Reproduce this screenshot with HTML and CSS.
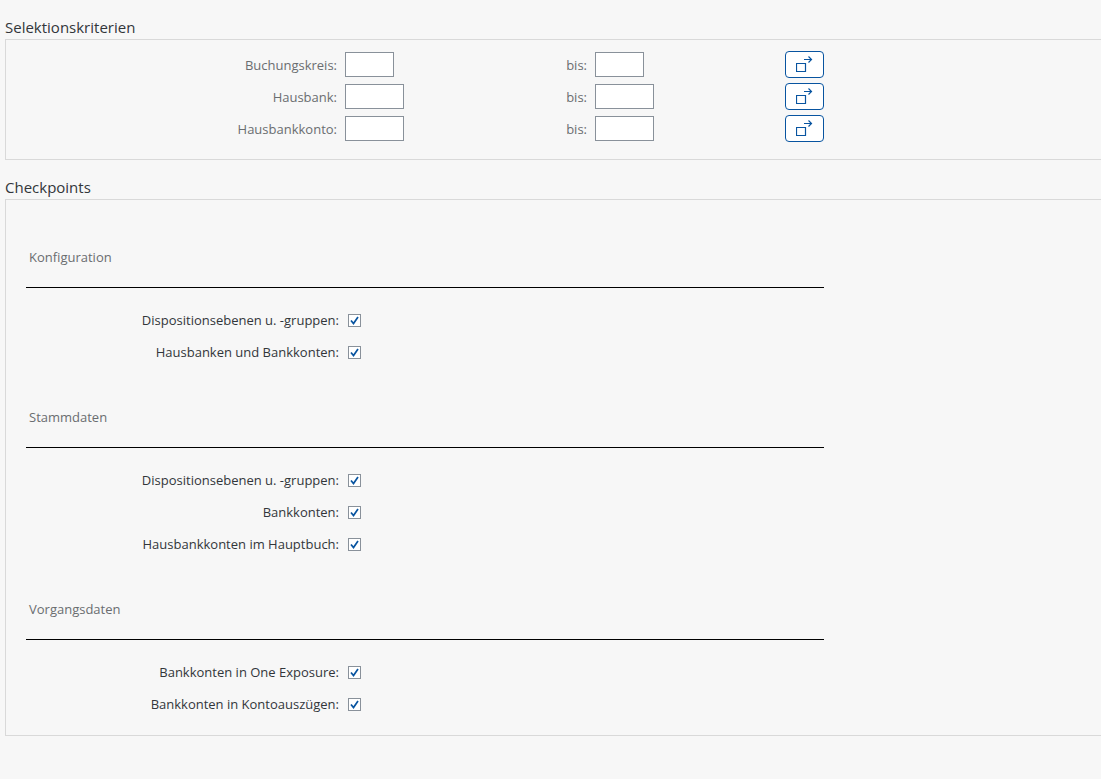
FILE: index.html
```html
<!DOCTYPE html>
<html lang="de">
<head>
<meta charset="utf-8">
<title>Selektionskriterien</title>
<link rel="stylesheet" href="styles.css">
</head>
<body>
<svg class="sprite" aria-hidden="true">
  <symbol id="multi" viewBox="0 0 17 17">
    <path d="M.5 7.5h9v8h-9zM8 3.5h8M12.5 .5l3 3-3 3" fill="none" stroke="currentColor" stroke-width="1.2"/>
  </symbol>
</svg>
<main class="page">
  <section class="section">
    <h2 class="title">Selektionskriterien</h2>
    <div class="box criteria">
      <div class="range">
        <label class="caption" for="bk1">Buchungskreis:</label>
        <input class="field short" id="bk1" type="text">
        <label class="caption" for="bk2">bis:</label>
        <input class="field short" id="bk2" type="text">
        <button class="more" type="button" aria-label="Mehrfachselektion Buchungskreis"><svg class="icon"><use href="#multi"/></svg></button>
      </div>
      <div class="range">
        <label class="caption" for="hb1">Hausbank:</label>
        <input class="field" id="hb1" type="text">
        <label class="caption" for="hb2">bis:</label>
        <input class="field" id="hb2" type="text">
        <button class="more" type="button" aria-label="Mehrfachselektion Hausbank"><svg class="icon"><use href="#multi"/></svg></button>
      </div>
      <div class="range">
        <label class="caption" for="hk1">Hausbankkonto:</label>
        <input class="field" id="hk1" type="text">
        <label class="caption" for="hk2">bis:</label>
        <input class="field" id="hk2" type="text">
        <button class="more" type="button" aria-label="Mehrfachselektion Hausbankkonto"><svg class="icon"><use href="#multi"/></svg></button>
      </div>
    </div>
  </section>
  <section class="section">
    <h2 class="title">Checkpoints</h2>
    <div class="box checkpoints">
      <div class="group">
        <h3 class="heading">Konfiguration</h3>
        <div class="option"><label for="c1">Dispositionsebenen u. -gruppen:</label><input class="check" id="c1" type="checkbox" checked></div>
        <div class="option"><label for="c2">Hausbanken und Bankkonten:</label><input class="check" id="c2" type="checkbox" checked></div>
      </div>
      <div class="group">
        <h3 class="heading">Stammdaten</h3>
        <div class="option"><label for="c3">Dispositionsebenen u. -gruppen:</label><input class="check" id="c3" type="checkbox" checked></div>
        <div class="option"><label for="c4">Bankkonten:</label><input class="check" id="c4" type="checkbox" checked></div>
        <div class="option"><label for="c5">Hausbankkonten im Hauptbuch:</label><input class="check" id="c5" type="checkbox" checked></div>
      </div>
      <div class="group">
        <h3 class="heading">Vorgangsdaten</h3>
        <div class="option"><label for="c6">Bankkonten in One Exposure:</label><input class="check" id="c6" type="checkbox" checked></div>
        <div class="option"><label for="c7">Bankkonten in Kontoauszügen:</label><input class="check" id="c7" type="checkbox" checked></div>
      </div>
    </div>
  </section>
</main>
</body>
</html>
```
FILE: styles.css
```css
* { box-sizing: border-box; }
body {
  margin: 0;
  background: #f7f7f7;
  color: #32363a;
  font: 13px/32px "Open Sans", "Noto Sans", sans-serif;
}
.sprite { display: none; }
.page {
  display: flex;
  flex-direction: column;
  gap: 16px;
  padding: 16px 0 16px 5px;
}
.title {
  margin: 0;
  font-size: 15px;
  font-weight: 400;
  line-height: 23px;
}
.box {
  border: 1px solid #d9d9d9;
  border-right: 0;
}
.criteria { padding: 8px 0 15px; }
.range {
  display: grid;
  grid-template-columns: 331px 212px 22px 182px 39px;
  column-gap: 8px;
  align-items: center;
  height: 32px;
}
.caption {
  padding-top: 2px;
  color: #6a6d70;
  line-height: 24px;
  text-align: right;
}
.field {
  width: 59px;
  height: 25px;
  padding: 0 4px;
  border: 1px solid #89919a;
  background: #fff;
  font: inherit;
  line-height: 23px;
}
.short { width: 49px; }
.more {
  display: flex;
  align-items: center;
  justify-content: center;
  height: 27px;
  padding: 0;
  border: 1px solid #0854a0;
  border-radius: 4px;
  background: #fff;
  color: #0854a0;
}
.icon { width: 17px; height: 17px; }
.checkpoints {
  display: flex;
  flex-direction: column;
  gap: 33px;
  padding: 41px 20px 15px;
}
.group { max-width: 798px; }
.heading {
  margin: 0 0 16px;
  padding: 0 3px 14px;
  border-bottom: 1px solid #000;
  color: #6a6d70;
  font-size: 13px;
  font-weight: 400;
}
.option {
  display: grid;
  grid-template-columns: 313px 13px;
  column-gap: 9px;
  align-items: center;
  height: 32px;
  text-align: right;
}
.check {
  appearance: none;
  width: 13px;
  height: 13px;
  margin: 0;
  border: 1px solid #89919a;
  background: #fff;
}
.check:checked {
  background: #fff url("data:image/svg+xml,%3Csvg xmlns='http://www.w3.org/2000/svg' viewBox='0 0 11 11'%3E%3Cpath d='M2 5.5l2.5 3 4.5-6.5' fill='none' stroke='%230854a0' stroke-width='1.7'/%3E%3C/svg%3E") center / 11px 11px no-repeat;
}
```
